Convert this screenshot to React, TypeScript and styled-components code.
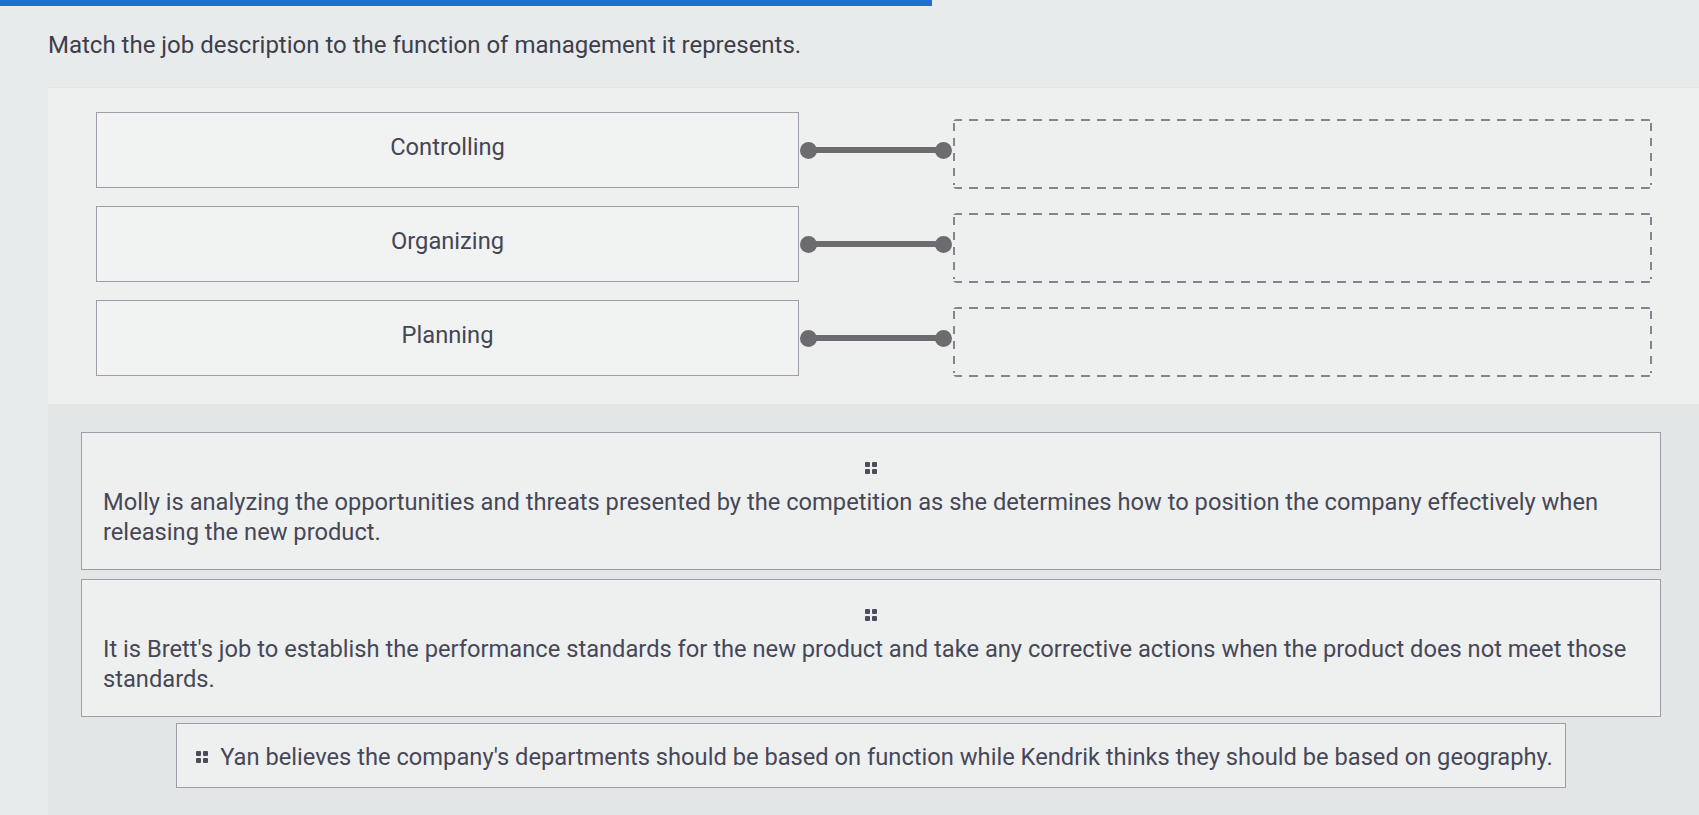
import React from 'react'
import styled, { createGlobalStyle } from 'styled-components'

const GlobalStyle = createGlobalStyle`
  html, body {
    margin: 0;
    padding: 0;
    background: #e8ebeb;
  }
  body {
    font-family: Roboto, "Liberation Sans", sans-serif;
    color: #474757;
  }
`

const Page = styled.div`
  width: 1699px;
  min-height: 815px;
  display: flex;
  flex-direction: column;
  background: #e8ebeb;
  overflow: hidden;
`

const TopBar = styled.div`
  width: 932px;
  height: 6px;
  background: #1f6fd1;
`

const Title = styled.h1`
  margin: 25px 0 0 48px;
  font-size: 24px;
  line-height: 28px;
  font-weight: 400;
  color: #3e3e4c;
`

const MatchPanel = styled.div`
  margin: 28px 0 0 48px;
  padding: 24px 0 28px 48px;
  display: flex;
  flex-direction: column;
  gap: 18px;
  background: #eef0f0;
  border-top: 1px solid #e2e5e5;
`

const Row = styled.div`
  display: flex;
  align-items: center;
  height: 76px;
`

const TermBox = styled.div`
  width: 703px;
  height: 76px;
  box-sizing: border-box;
  display: flex;
  align-items: center;
  justify-content: center;
  padding-bottom: 6px;
  background: #f1f3f3;
  border: 1px solid #a09cab;
  font-size: 23.7px;
  color: #454553;
`

const Connector = styled.div`
  width: 154px;
  display: flex;
  align-items: center;
  padding: 0 1px;
  box-sizing: border-box;
`

const Dot = styled.span`
  width: 17px;
  height: 17px;
  border-radius: 50%;
  background: #6c6c70;
  flex-shrink: 0;
`

const Bar = styled.span`
  flex: 1;
  height: 6px;
  margin: 0 -3px;
  background: #6c6c70;
`

const dash = '#84848f'

const DropZone = styled.div`
  width: 699px;
  height: 70px;
  margin-top: 8px;
  box-sizing: border-box;
  border-radius: 4px;
  background:
    repeating-linear-gradient(90deg, ${dash} 0 9px, transparent 9px 16px) top left / 100% 2px no-repeat,
    repeating-linear-gradient(90deg, ${dash} 0 9px, transparent 9px 16px) bottom left / 100% 2px no-repeat,
    repeating-linear-gradient(180deg, ${dash} 0 8px, transparent 8px 15px) top 4px left / 2px calc(100% - 8px) no-repeat,
    repeating-linear-gradient(180deg, ${dash} 0 8px, transparent 8px 15px) top 4px right / 2px calc(100% - 8px) no-repeat;
`

const Pool = styled.div`
  flex: 1;
  margin-left: 48px;
  padding: 28px 38px 26px 33px;
  display: flex;
  flex-direction: column;
  align-items: stretch;
  background: #e3e6e7;
`

const Card = styled.div<{ $compact?: boolean; $gap?: number }>`
  box-sizing: border-box;
  background: #eef0f0;
  border: 1px solid #9e9ca8;
  display: flex;
  flex-direction: ${p => (p.$compact ? 'row' : 'column')};
  align-items: ${p => (p.$compact ? 'center' : 'stretch')};
  align-self: ${p => (p.$compact ? 'center' : 'stretch')};
  gap: ${p => (p.$compact ? '12px' : '13px')};
  padding: ${p => (p.$compact ? '3px 12px 0 19px' : '29px 22px 20px 21px')};
  height: ${p => (p.$compact ? '65px' : '138px')};
  margin-top: ${p => p.$gap ?? 0}px;
`

const Handle = styled.span<{ $centered?: boolean }>`
  display: grid;
  grid-template-columns: 5px 5px;
  grid-auto-rows: 5px;
  gap: 2px;
  align-self: ${p => (p.$centered ? 'center' : 'auto')};
  flex-shrink: 0;

  & > i {
    background: #4c4c5c;
    border-radius: 1px;
  }
`

const CardText = styled.p`
  margin: 0;
  font-size: 23.7px;
  line-height: 30px;
  color: #474757;
`

const terms = ['Controlling', 'Organizing', 'Planning']

const DragHandle = ({ centered }: { centered?: boolean }) => (
  <Handle $centered={centered}>
    <i />
    <i />
    <i />
    <i />
  </Handle>
)

export default function App() {
  return (
    <Page>
      <GlobalStyle />
      <TopBar />
      <Title>Match the job description to the function of management it represents.</Title>
      <MatchPanel>
        {terms.map(t => (
          <Row key={t}>
            <TermBox>{t}</TermBox>
            <Connector>
              <Dot />
              <Bar />
              <Dot />
            </Connector>
            <DropZone />
          </Row>
        ))}
      </MatchPanel>
      <Pool>
        <Card>
          <DragHandle centered />
          <CardText>
            Molly is analyzing the opportunities and threats presented by the competition as she determines how to
            position the company effectively when releasing the new product.
          </CardText>
        </Card>
        <Card $gap={9}>
          <DragHandle centered />
          <CardText>
            It is Brett's job to establish the performance standards for the new product and take any corrective
            actions when the product does not meet those standards.
          </CardText>
        </Card>
        <Card $compact $gap={6}>
          <DragHandle />
          <CardText>
            Yan believes the company's departments should be based on function while Kendrik thinks they should be
            based on geography.
          </CardText>
        </Card>
      </Pool>
    </Page>
  )
}
